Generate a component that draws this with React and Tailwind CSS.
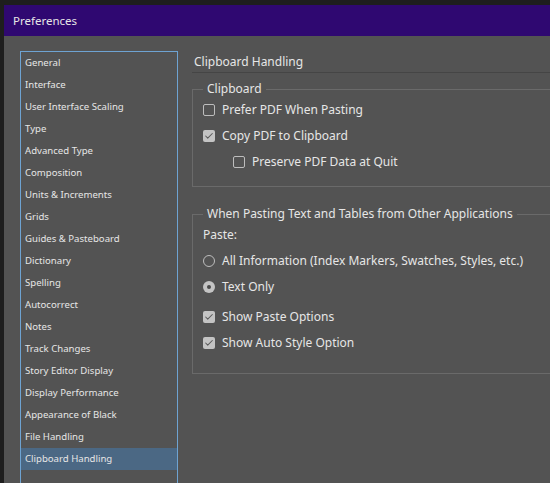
import { Check } from 'lucide-react';

const sections = [
  'General',
  'Interface',
  'User Interface Scaling',
  'Type',
  'Advanced Type',
  'Composition',
  'Units & Increments',
  'Grids',
  'Guides & Pasteboard',
  'Dictionary',
  'Spelling',
  'Autocorrect',
  'Notes',
  'Track Changes',
  'Story Editor Display',
  'Display Performance',
  'Appearance of Black',
  'File Handling',
  'Clipboard Handling',
];

function Box({ checked }) {
  return checked ? (
    <span className="w-[12px] h-[12px] rounded-[2px] bg-[#c4c4c4] flex items-center justify-center shrink-0">
      <Check size={10} strokeWidth={2.5} className="text-[#5a5a5a]" />
    </span>
  ) : (
    <span className="w-[12px] h-[12px] rounded-[2px] border border-[#bdbdbd] shrink-0" />
  );
}

function Radio({ checked }) {
  return checked ? (
    <span className="w-[12px] h-[12px] rounded-full bg-[#c4c4c4] flex items-center justify-center shrink-0">
      <span className="w-[4px] h-[4px] rounded-full bg-[#4a4a4a]" />
    </span>
  ) : (
    <span className="w-[12px] h-[12px] rounded-full border border-[#bdbdbd] shrink-0" />
  );
}

function Row({ children, className = '' }) {
  return <div className={`flex items-center gap-[7px] h-[26px] ${className}`}>{children}</div>;
}

export default function App() {
  return (
    <div className="w-[550px] h-[483px] overflow-hidden bg-[#1e1e1e] pt-[5px] pl-[4px] font-['Noto_Sans',sans-serif] text-[#e6e6e6]">
      <div className="w-[720px] h-[520px] flex flex-col">
        <div className="h-[31px] bg-[#2f0871] flex items-center pl-[9px] text-[11.5px]">Preferences</div>
        <div className="flex-1 bg-[#535353] flex">
          {/* category list */}
          <div className="ml-[16px] mt-[15px] w-[158px] border border-[#6ea3d2] self-stretch">
            {sections.map(s => (
              <div
                key={s}
                className={`h-[22px] flex items-center pl-[4px] text-[9.6px] ${s === 'Clipboard Handling' ? 'bg-[#4b6884]' : ''}`}
              >
                {s}
              </div>
            ))}
          </div>

          <div className="ml-[14px] flex-1 pt-[18px] text-[12px]">
            <div className="h-[16px] leading-[16px] pl-[2px]">Clipboard Handling</div>
            <div className="mt-[2px] border-b border-[#454545]" />

            <fieldset className="mt-[8px] border border-[#6a6a6a] px-[10px] pb-[11px]">
              <legend className="px-[4px] leading-[16px]">Clipboard</legend>
              <Row>
                <Box />
                <span>Prefer PDF When Pasting</span>
              </Row>
              <Row>
                <Box checked />
                <span>Copy PDF to Clipboard</span>
              </Row>
              <Row className="pl-[30px]">
                <Box />
                <span>Preserve PDF Data at Quit</span>
              </Row>
            </fieldset>

            <fieldset className="mt-[19px] border border-[#6a6a6a] px-[10px] pb-[17px]">
              <legend className="px-[4px] leading-[16px]">
                When Pasting Text and Tables from Other Applications
              </legend>
              <div className="h-[26px] flex items-center">Paste:</div>
              <Row>
                <Radio />
                <span>All Information (Index Markers, Swatches, Styles, etc.)</span>
              </Row>
              <Row>
                <Radio checked />
                <span>Text Only</span>
              </Row>
              <Row className="mt-[4px]">
                <Box checked />
                <span>Show Paste Options</span>
              </Row>
              <Row>
                <Box checked />
                <span>Show Auto Style Option</span>
              </Row>
            </fieldset>
          </div>
        </div>
      </div>
    </div>
  );
}
